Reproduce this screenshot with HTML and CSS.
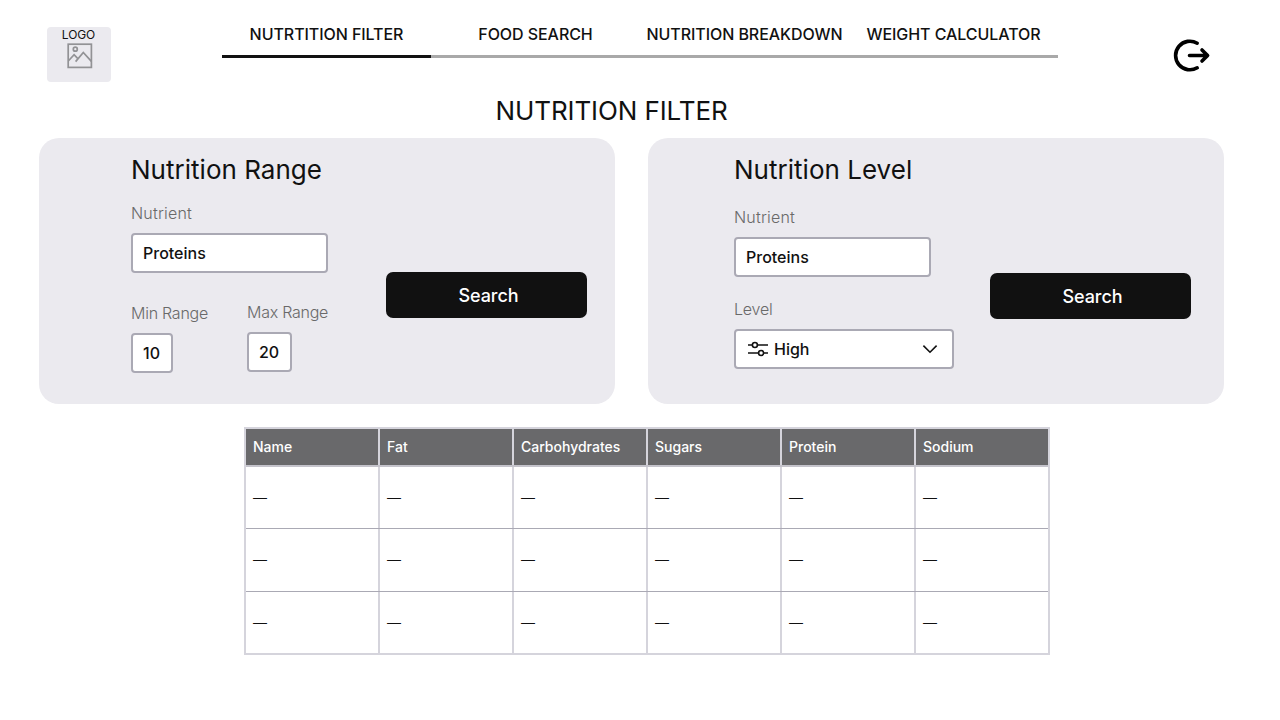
FILE: index.html
```html
<!DOCTYPE html>
<html lang="en">
<head>
<meta charset="utf-8">
<title>Nutrition Filter</title>
<link rel="stylesheet" href="styles.css">
</head>
<body>
<header class="header">
  <div class="logo">
    <span class="logo-text">LOGO</span>
    <svg class="logo-icon" width="26" height="26" viewBox="0 0 26 26" fill="none" stroke="#929295" stroke-width="1.7">
      <rect x="1.2" y="1.2" width="23.2" height="23.2"/>
      <circle cx="8.3" cy="6.2" r="2"/>
      <path d="M1.5 17.8L7.1 11.7L10.6 15.4M8.6 18.6L16.3 9.5L24.4 18.3"/>
    </svg>
  </div>
  <nav class="tabs">
    <a class="tab tab-active">NUTRTITION FILTER</a>
    <a class="tab">FOOD SEARCH</a>
    <a class="tab">NUTRITION BREAKDOWN</a>
    <a class="tab">WEIGHT CALCULATOR</a>
  </nav>
  <svg class="logout" width="40" height="36" viewBox="0 0 40 36" fill="none" stroke="#000" stroke-width="3.6" stroke-linecap="round" stroke-linejoin="round">
    <path d="M25.2 5.2A14.3 14.3 0 1 0 25.2 29.8"/>
    <path d="M17.5 17.5H35.5M30 11.9L35.6 17.5L30 23.1"/>
  </svg>
</header>
<h1 class="title">NUTRITION FILTER</h1>
<main>
  <div class="panels">
    <section class="panel range">
      <div class="fields">
        <h2 class="heading">Nutrition Range</h2>
        <label class="label">Nutrient</label>
        <div class="input">Proteins</div>
        <div class="limits">
          <div class="limit min"><label class="label">Min Range</label><div class="input">10</div></div>
          <div class="limit max"><label class="label">Max Range</label><div class="input">20</div></div>
        </div>
      </div>
      <button class="search">Search</button>
    </section>
    <section class="panel level">
      <div class="fields">
        <h2 class="heading">Nutrition Level</h2>
        <label class="label">Nutrient</label>
        <div class="input">Proteins</div>
        <label class="label level-label">Level</label>
        <div class="input select">
          <svg width="20" height="16" viewBox="0 0 20 16" fill="none" stroke="#111" stroke-width="1.6">
            <path d="M0 4H4.2M9.6 4H20M0 12H10.4M15.8 12H20"/>
            <circle cx="6.9" cy="4" r="2.5"/><circle cx="13.1" cy="12" r="2.5"/>
          </svg>
          <span>High</span>
          <svg class="chevron" width="16" height="10" viewBox="0 0 16 10" fill="none" stroke="#111" stroke-width="1.6"><path d="M1.4 1.6L8 8.2L14.6 1.6"/></svg>
        </div>
      </div>
      <button class="search">Search</button>
    </section>
  </div>
  <div class="table">
    <div class="row head"><div>Name</div><div>Fat</div><div>Carbohydrates</div><div>Sugars</div><div>Protein</div><div>Sodium</div></div>
    <div class="row first"><div>—</div><div>—</div><div>—</div><div>—</div><div>—</div><div>—</div></div>
    <div class="row middle"><div>—</div><div>—</div><div>—</div><div>—</div><div>—</div><div>—</div></div>
    <div class="row last"><div>—</div><div>—</div><div>—</div><div>—</div><div>—</div><div>—</div></div>
  </div>
</main>
</body>
</html>
```
FILE: styles.css
```css
* { box-sizing: border-box; }
body { margin: 0; background: #fff; color: #111; font-family: Inter, sans-serif; }
.header { display: flex; align-items: flex-start; height: 97px; padding-left: 47px; }
.logo { width: 64px; height: 55px; margin-top: 27px; border-radius: 4px; background: #ebeaef; display: flex; flex-direction: column; align-items: center; }
.logo-text { margin-right: 1px; font-size: 12px; line-height: 16px; letter-spacing: -0.1px; }
.logo-icon { margin: -0.5px 0 0 1px; }
.tabs { display: flex; margin: 14px 0 0 111px; width: 836px; }
.tab { width: 209px; height: 44px; border-bottom: 3px solid #a9a9a9; font-size: 16px; font-weight: 500; letter-spacing: -0.06px; line-height: 40px; text-align: center; white-space: nowrap; }
.tab-active { border-color: #111; }
.logout { margin: 38px 0 0 114px; }
.title { margin: 0 0 0 495.5px; height: 41px; font-size: 26px; font-weight: 400; letter-spacing: -0.1px; line-height: 28px; }
.panels { display: flex; gap: 33px; padding-left: 39px; }
.panel { display: flex; width: 576px; height: 266px; border-radius: 20px; background: #ebeaef; }
.fields { width: 220px; }
.range .fields { width: 197px; margin-left: 92px; }
.level .fields { margin-left: 86px; }
.heading { margin: 16px 0 0; height: 49px; font-size: 26px; font-weight: 400; letter-spacing: 0.02px; line-height: 32px; white-space: nowrap; }
.level .heading { height: 53px; }
.label { display: block; height: 30px; color: #696969; font-size: 16px; font-weight: 300; letter-spacing: 0.2px; line-height: 21px; white-space: nowrap; }
.input { width: 197px; height: 40px; padding-left: 10px; border: 2px solid #aaa9b4; border-radius: 4px; background: #fff; font-size: 16px; font-weight: 500; line-height: 36px; }
.limits { display: flex; gap: 39px; padding-top: 29px; }
.limit { flex: none; }
.limit .label { letter-spacing: -0.25px; }
.min { width: 77px; padding-top: 1px; }
.min .input { width: 42px; }
.max .input { width: 45px; }
.level .level-label { margin-top: 22px; letter-spacing: -0.2px; }
.select { display: flex; align-items: center; width: 220px; padding: 0 14px 0 12px; gap: 6px; }
.chevron { margin-left: auto; }
.search { width: 201px; height: 46px; margin: 134px 0 0 58px; padding: 1px 0 0 4px; border: 0; border-radius: 7px; background: #111; color: #fff; font: 500 18px/46px Inter, sans-serif; letter-spacing: -0.05px; text-align: center; }
.level .search { margin: 135px 0 0 36px; }
.table { width: 806px; margin: 23px 0 0 244px; border: 2px solid #d5d4dc; }
.row { display: grid; grid-template-columns: repeat(6, 132px); column-gap: 2px; background: #d5d4dc; }
.row div { padding-left: 7px; background: #fff; font: 14px/61px "Liberation Sans", sans-serif; }
.head { height: 38px; border-bottom: 2px solid #c4c3cb; }
.row.head div { background: #69696b; color: #fff; font: 500 14px/36px Inter, sans-serif; }
.first, .middle { border-bottom: 1px solid #aaa9b4; }
.first { height: 62px; }
.middle { height: 63px; }
.last { height: 61px; }
```
